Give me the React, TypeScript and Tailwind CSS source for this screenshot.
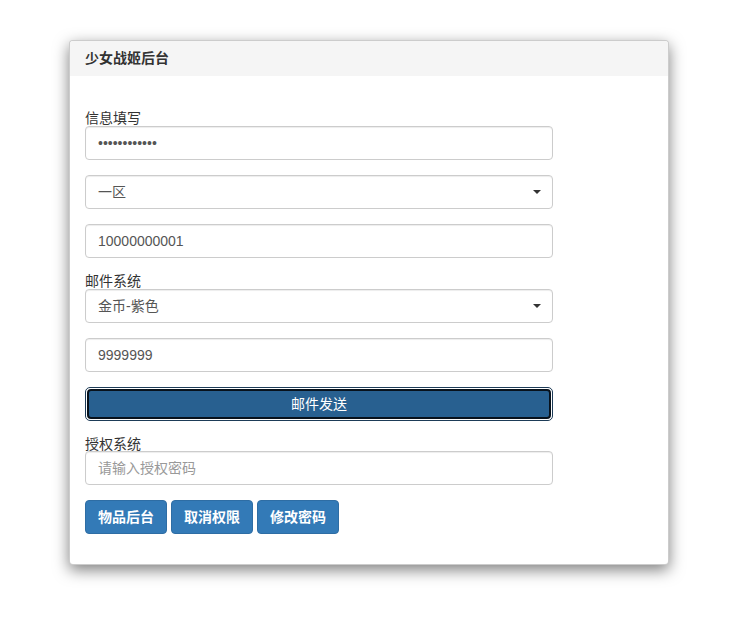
const font = {
  fontFamily: '"Liberation Sans", "Noto Sans CJK SC", sans-serif',
};

function Caret() {
  return (
    <span className="pointer-events-none absolute right-[12px] top-1/2 -translate-y-1/2 w-0 h-0 border-l-[4px] border-r-[4px] border-t-[4px] border-l-transparent border-r-transparent border-t-[#333]" />
  );
}

const inputCls =
  "block w-full h-[34px] px-[12px] text-[14px] text-[#555] bg-white border border-[#ccc] rounded-[4px] shadow-[inset_0_1px_1px_rgba(0,0,0,0.075)] outline-none placeholder:text-[#999]";

function Label({ children, short }: { children: React.ReactNode; short?: boolean }) {
  return (
    <label
      className={`block ${short ? "h-[15px]" : "h-[16px]"} leading-[16px] text-[14px] text-[#333] overflow-visible`}
    >
      {children}
    </label>
  );
}

export default function App() {
  return (
    <div className="min-h-[643px] bg-white pt-[40px]" style={font}>
      <div className="ml-[69px] w-[600px] bg-white border border-[rgba(0,0,0,0.2)] rounded-[4px] shadow-[0_5px_15px_rgba(0,0,0,0.5)] overflow-hidden">
        <div className="h-[35px] bg-[#f5f5f5] px-[15px] flex items-center">
          <h3 className="text-[14px] font-bold text-[#333]">少女战姬后台</h3>
        </div>

        <div className="px-[15px] pt-[34px] pb-[30px]">
          <div className="w-[468px] flex flex-col">
            <Label>信息填写</Label>
            <input
              type="password"
              defaultValue="123456789012"
              className={inputCls}
              style={font}
            />

            <div className="relative mt-[15px]">
              <select
                className={`${inputCls} appearance-none text-[#333]`}
                style={font}
                defaultValue="1"
              >
                <option value="1">一区</option>
                <option value="2">二区</option>
              </select>
              <Caret />
            </div>

            <input
              type="text"
              defaultValue="10000000001"
              className={`${inputCls} mt-[15px]`}
              style={font}
            />

            <div className="mt-[15px]">
              <Label>邮件系统</Label>
            </div>
            <div className="relative">
              <select
                className={`${inputCls} appearance-none text-[#333]`}
                style={font}
                defaultValue="gold"
              >
                <option value="gold">金币-紫色</option>
              </select>
              <Caret />
            </div>

            <input
              type="text"
              defaultValue="9999999"
              className={`${inputCls} mt-[15px]`}
              style={font}
            />

            <div className="mt-[15px] h-[34px] rounded-[5px] border border-[#1d3b57] bg-white p-px">
              <button
                className="w-full h-full rounded-[4px] border-2 border-[#08121c] bg-[#286090] text-white text-[14px]"
                style={font}
              >
                邮件发送
              </button>
            </div>

            <div className="mt-[15px]">
              <Label short>授权系统</Label>
            </div>
            <input
              type="password"
              placeholder="请输入授权密码"
              className={inputCls}
              style={font}
            />

            <div className="mt-[15px] flex gap-[4px]">
              {["物品后台", "取消权限", "修改密码"].map((t) => (
                <button
                  key={t}
                  className="w-[82px] h-[34px] rounded-[4px] border border-[#2e6da4] bg-[#337ab7] text-white text-[14px] font-bold"
                  style={font}
                >
                  {t}
                </button>
              ))}
            </div>
          </div>
        </div>
      </div>
    </div>
  );
}
